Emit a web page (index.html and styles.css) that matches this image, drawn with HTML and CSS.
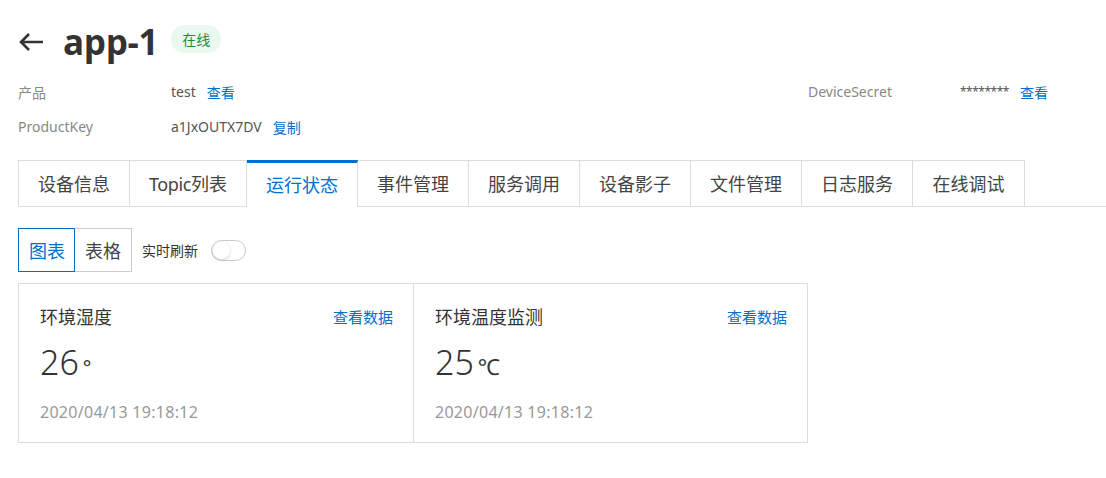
FILE: index.html
```html
<!DOCTYPE html>
<html lang="zh-CN">
<head>
<meta charset="utf-8">
<title>app-1</title>
<link rel="stylesheet" href="styles.css">
</head>
<body>
<div class="page">
  <div class="header">
    <span class="back">
      <svg width="26" height="20" viewBox="0 0 26 20"><path d="M25 10H3M11 2L3 10l8 8" fill="none" stroke="#333" stroke-width="2.6"/></svg>
    </span>
    <h1 class="title">app-1</h1>
    <span class="badge">在线</span>
  </div>

  <div class="info">
    <span class="label">产品</span>
    <span class="value">test<a class="link">查看</a></span>
    <span class="label">DeviceSecret</span>
    <span class="value"><span class="mask">********</span><a class="link">查看</a></span>
    <span class="label">ProductKey</span>
    <span class="value">a1JxOUTX7DV<a class="link">复制</a></span>
  </div>

  <div class="tabs">
    <div class="tab">设备信息</div>
    <div class="tab"><span class="latin">Topic</span>列表</div>
    <div class="tab active">运行状态</div>
    <div class="tab">事件管理</div>
    <div class="tab">服务调用</div>
    <div class="tab">设备影子</div>
    <div class="tab">文件管理</div>
    <div class="tab">日志服务</div>
    <div class="tab">在线调试</div>
  </div>

  <div class="toolbar">
    <div class="seg">
      <span class="seg-btn on">图表</span>
      <span class="seg-btn">表格</span>
    </div>
    <span class="refresh">实时刷新</span>
    <span class="switch"><span class="knob"></span></span>
  </div>

  <div class="cards">
    <div class="card">
      <div class="card-head"><span class="card-title">环境湿度</span><a class="link small">查看数据</a></div>
      <div class="card-value"><span class="num">26</span><span class="unit deg">°</span></div>
      <div class="card-time">2020/04/13 19:18:12</div>
    </div>
    <div class="card">
      <div class="card-head"><span class="card-title">环境温度监测</span><a class="link small">查看数据</a></div>
      <div class="card-value"><span class="num">25</span><span class="unit">℃</span></div>
      <div class="card-time">2020/04/13 19:18:12</div>
    </div>
  </div>
</div>
</body>
</html>
```

FILE: styles.css
```css
* { box-sizing: border-box; }
html, body { margin: 0; background: #fff; }
body {
  font-family: "Noto Sans", "Noto Sans CJK SC", sans-serif;
  color: #333;
}
.page { padding: 20px 0 0 18px; }

.header { display: flex; align-items: center; height: 44px; }
.back { display: flex; width: 26px; height: 20px; margin-right: 19px; }
.title {
  margin: 0;
  font-family: "Open Sans", "Noto Sans", sans-serif;
  font-weight: 700;
  font-size: 35px;
  letter-spacing: -0.3px;
  color: #333;
  line-height: 44px;
}
.badge {
  margin-left: 13px;
  margin-top: -6px;
  height: 28px;
  padding: 0 11px;
  border-radius: 14px;
  background: #ebf8ef;
  color: #1e8e3e;
  font-size: 14px;
  line-height: 28px;
  font-family: "Noto Sans CJK SC", sans-serif;
}

.info {
  margin-top: 10px;
  font-size: 14px;
  display: grid;
  grid-template-columns: 153px 637px 152px auto;
  grid-auto-rows: 35px;
  align-items: center;
}
.label { color: #888; }
.value { color: #555; display: flex; align-items: center; gap: 11px; }
.mask { font-size: 12px; letter-spacing: -0.5px; }
.link { color: #0070cc; text-decoration: none; cursor: pointer; }

.tabs {
  margin-top: 16px;
  display: flex;
  border-bottom: 1px solid #ddd;
}
.tab {
  min-width: 111px;
  height: 47px;
  padding: 0 19px;
  margin-bottom: -1px;
  border: 1px solid #ddd;
  border-left: none;
  font-size: 18px;
  line-height: 45px;
  text-align: center;
  color: #444;
  font-family: "Noto Sans CJK SC", sans-serif;
  white-space: nowrap;
}
.tab .latin { font-family: "Noto Sans", sans-serif; letter-spacing: -0.4px; }
.tab:first-child { border-left: 1px solid #ddd; min-width: 112px; }
.tab:last-child { min-width: 112px; }
.tab.active {
  color: #0070cc;
  border-top: 3px solid #0070cc;
  border-bottom-color: #fff;
  line-height: 43px;
}

.toolbar { display: flex; align-items: center; margin-top: 21px; }
.seg { display: flex; }
.seg-btn {
  height: 44px;
  padding: 0 10px;
  border: 1px solid #ccc;
  font-size: 18px;
  line-height: 42px;
  color: #444;
  font-family: "Noto Sans CJK SC", sans-serif;
}
.seg-btn + .seg-btn { border-left: none; }
.seg-btn.on { border-color: #0070cc; color: #0070cc; padding-right: 9px; }
.refresh { margin-left: 10px; font-size: 14px; color: #333; font-family: "Noto Sans CJK SC", sans-serif; }
.switch {
  margin-left: 13px;
  width: 35px;
  height: 21px;
  border: 1px solid #c8c8d4;
  border-radius: 11px;
  display: flex;
  align-items: center;
  padding: 1px;
}
.knob {
  width: 17px; height: 17px; border-radius: 50%;
  background: #fff;
  box-shadow: 0 1px 3px rgba(0,0,0,.2);
}

.cards { display: flex; margin-top: 11px; }
.card {
  width: 396px;
  height: 160px;
  border: 1px solid #ddd;
  padding: 20px 20px 0 21px;
}
.card + .card { border-left: none; width: 394px; }
.card-head { display: flex; justify-content: space-between; align-items: center; height: 24px; }
.card-title { font-size: 18px; color: #333; font-family: "Noto Sans CJK SC", sans-serif; }
.link.small { font-size: 15px; font-family: "Noto Sans CJK SC", sans-serif; }
.card-value { display: flex; align-items: baseline; margin-top: 12px; height: 44px; }
.num { font-size: 34px; line-height: 44px; color: #333; font-weight: 300; }
.unit { font-size: 22px; margin-left: 4px; color: #333; }
.unit.deg { font-size: 20px; }
.card-time { margin-top: 17px; font-size: 16px; letter-spacing: 0.28px; color: #999; }
```
